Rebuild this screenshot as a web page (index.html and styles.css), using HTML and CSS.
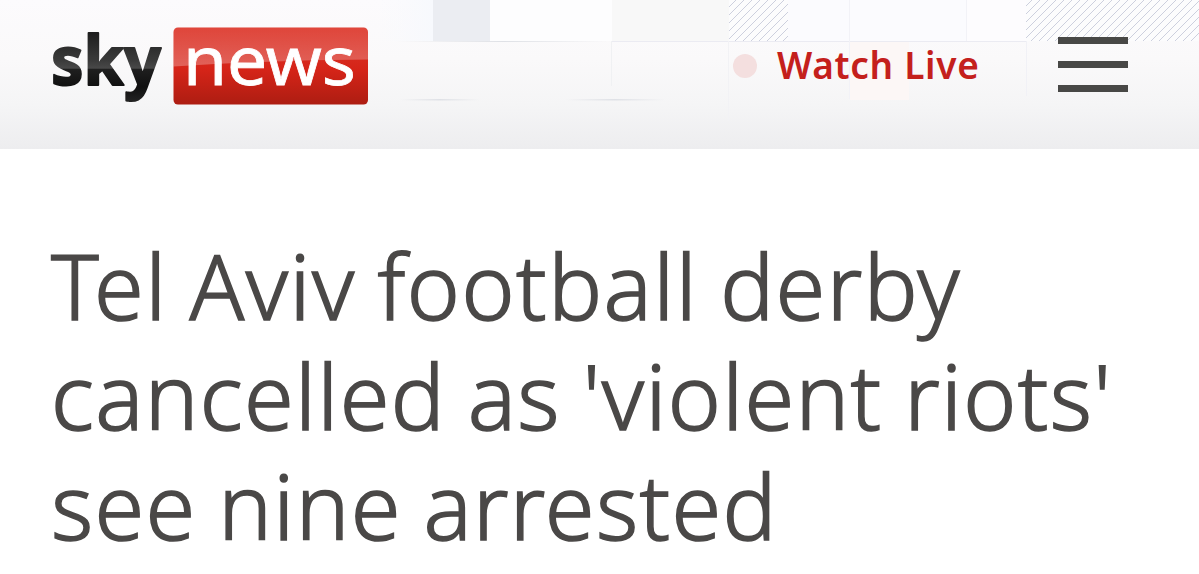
FILE: index.html
```html
<!DOCTYPE html>
<html lang="en">
<head>
  <meta charset="UTF-8" />
  <meta name="viewport" content="width=device-width, initial-scale=1.0"/>
  <title>Tel Aviv football derby cancelled as 'violent riots' see nine arrested</title>
  <link rel="stylesheet" href="styles.css">
</head>
<body>
  <header class="header">
    <!-- Background tiles -->
    <svg class="header-pattern" viewBox="0 0 1199 149" aria-hidden="true">
      <defs>
        <pattern id="hatch" width="8" height="8" patternUnits="userSpaceOnUse">
          <path d="M-1 9L9 -1M-1 1L1 -1M7 9L9 7" stroke="#cdd0de" stroke-width="1" />
        </pattern>
        <linearGradient id="fadeLine">
          <stop offset="0" stop-color="#dfe1e6" stop-opacity="0" />
          <stop offset="0.5" stop-color="#dfe1e6" />
          <stop offset="1" stop-color="#dfe1e6" stop-opacity="0" />
        </linearGradient>
        <linearGradient id="fadeTile">
          <stop offset="0" stop-color="#f8f9fd" stop-opacity="0" />
          <stop offset="1" stop-color="#f7f9fd" />
        </linearGradient>
      </defs>
      <rect x="380" y="0" width="53" height="41" fill="url(#fadeTile)" />
      <rect x="433" y="0" width="57" height="41" fill="#ebedf2" />
      <rect x="490" y="0" width="122" height="41" fill="#fdfdfe" />
      <rect x="612" y="0" width="117" height="41" fill="#f8f8f8" />
      <rect x="729" y="0" width="59" height="41" fill="#fcfcfd" />
      <rect x="729" y="0" width="59" height="41" fill="url(#hatch)" />
      <rect x="788" y="0" width="178" height="41" fill="#fbfbfe" />
      <rect x="966" y="0" width="60" height="41" fill="#fdfcfe" />
      <rect x="1026" y="0" width="173" height="41" fill="#fcfcfd" />
      <rect x="1026" y="0" width="173" height="41" fill="url(#hatch)" />
      <rect x="395" y="41" width="217" height="1" fill="url(#fadeLine)" />
      <rect x="612" y="41" width="414" height="1" fill="#ebebf2" />
      <rect x="400" y="99" width="80" height="1.500" fill="url(#fadeLine)" />
      <rect x="565" y="99" width="100" height="1.500" fill="url(#fadeLine)" />
      <rect x="849" y="0" width="1" height="99" fill="#f2f2f7" />
      <rect x="966" y="0" width="1" height="41" fill="#f2f2f7" />
      <rect x="1026" y="41" width="1" height="55" fill="#f1f1f6" />
      <rect x="611" y="41" width="1" height="45" fill="#f0f1f3" />
      <rect x="728" y="41" width="1" height="80" fill="#f2f2f5" />
      <rect x="850" y="42" width="59" height="58" fill="#fcf7f6" />
    </svg>

    <a class="logo" href="#">
      <svg width="318" height="80" viewBox="0 0 318 80" role="img" aria-label="Sky News">
        <defs>
          <linearGradient id="black" x1="0" y1="5" x2="0" y2="75" gradientUnits="userSpaceOnUse">
            <stop offset="0" stop-color="#1c1c1c" />
            <stop offset="0.38" stop-color="#383838" />
            <stop offset="0.4" stop-color="#383838" />
            <stop offset="0.53" stop-color="#484848" />
            <stop offset="0.55" stop-color="#1f1f1f" />
            <stop offset="0.8" stop-color="#101010" />
            <stop offset="1" stop-color="#222" />
          </linearGradient>
          <linearGradient id="red" x1="0" y1="0" x2="0" y2="1">
            <stop offset="0" stop-color="#dd382c" />
            <stop offset="0.55" stop-color="#d52418" />
            <stop offset="1" stop-color="#ad1d12" />
          </linearGradient>
          <linearGradient id="gloss" x1="0" y1="0" x2="0" y2="1">
            <stop offset="0" stop-color="#fff" stop-opacity="0.07" />
            <stop offset="1" stop-color="#fff" stop-opacity="0.28" />
          </linearGradient>
        </defs>
        <text class="logo-sky" x="0" y="59" textLength="110" lengthAdjust="spacingAndGlyphs" fill="url(#black)" stroke="url(#black)">sky</text>
        <rect x="122.500" y="1.500" width="194.500" height="77" rx="4.500" fill="url(#red)" />
        <path d="M122.500 6a4.500 4.500 0 0 1 4.500-4.500H312.500a4.500 4.500 0 0 1 4.500 4.500V33.500Q220 34 122.500 40.500Z" fill="url(#gloss)" />
        <text class="logo-news" x="132" y="58.500" textLength="173" lengthAdjust="spacingAndGlyphs" fill="#fff">news</text>
      </svg>
    </a>

    <a class="watch-live" href="#">
      <span class="live-dot"></span>
      <span class="live-text">Watch Live</span>
    </a>

    <button class="menu" aria-label="Menu">
      <span class="menu-bar"></span>
      <span class="menu-bar"></span>
      <span class="menu-bar"></span>
    </button>
  </header>

  <main class="article">
    <h1 class="headline">
      <span class="line line-1">Tel Aviv football derby</span>
      <span class="line line-2">cancelled as 'violent riots'</span>
      <span class="line line-3">see nine arrested</span>
    </h1>
  </main>
</body>
</html>
```
FILE: styles.css
```css
* {
  box-sizing: border-box;
}

body {
  margin: 0;
  background: #fff;
  color: #4a4847;
  font-family: "Noto Sans", "Open Sans", sans-serif;
  overflow: hidden;
}

.header {
  position: relative;
  display: flex;
  align-items: flex-start;
  height: 149px;
  padding: 0 71px 0 51px;
  background: linear-gradient(#fcfbfd 0%, #faf9fa 40%, #f5f5f6 70%, #ededef 100%);
}

.header-pattern {
  position: absolute;
  top: 0;
  left: 0;
  width: 1199px;
  height: 149px;
}

.logo,
.watch-live,
.menu {
  position: relative;
}

.logo {
  margin-top: 26px;
}

.logo svg {
  display: block;
  overflow: visible;
}

.logo-sky {
  font-size: 69px;
  font-weight: 700;
  stroke-width: 2px;
  stroke-linejoin: round;
}

.logo-news {
  font-size: 68px;
  font-weight: 400;
  stroke: #fff;
  stroke-width: 0.8px;
}

.watch-live {
  display: flex;
  align-items: center;
  gap: 20px;
  height: 52px;
  margin: 40px 0 0 auto;
  color: #c4201c;
  text-decoration: none;
}

.live-dot {
  width: 24px;
  height: 24px;
  border-radius: 50%;
  background: #f4dfdf;
}

.live-text {
  width: 202px;
  margin-top: -3px;
  font-size: 37px;
  font-weight: 600;
  letter-spacing: 0.7px;
  line-height: 52px;
  white-space: nowrap;
}

.menu {
  display: flex;
  flex-direction: column;
  gap: 17px;
  width: 70px;
  margin: 37px 0 0 79px;
  padding: 0;
  border: none;
  background: none;
  cursor: pointer;
}

.menu-bar {
  width: 70px;
  height: 7px;
  background: #484846;
}

.article {
  padding: 81px 51px 0;
}

.headline {
  margin: 0;
  font-size: 90px;
  font-weight: 300;
  line-height: 110px;
  word-spacing: -3px;
  -webkit-text-stroke: 1.5px #4a4847;
}

.line {
  display: block;
  white-space: nowrap;
}

.line-1 {
  letter-spacing: 1.5px;
}

.line-2 {
  letter-spacing: 1.35px;
}

.line-3 {
  letter-spacing: 1.35px;
}
```
